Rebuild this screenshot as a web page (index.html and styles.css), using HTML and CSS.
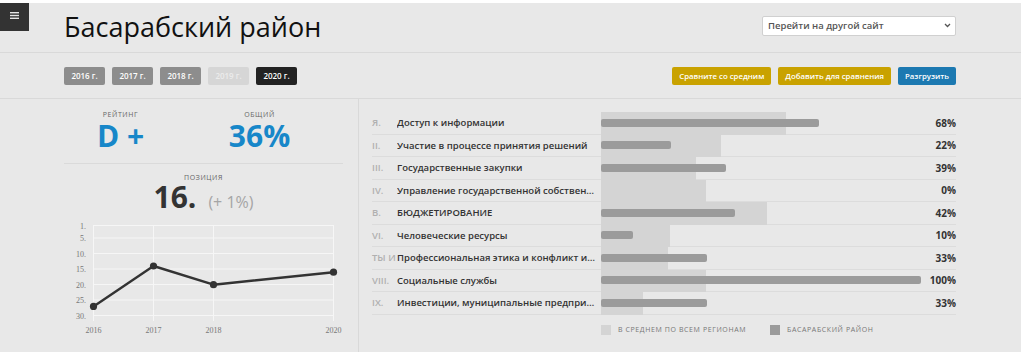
FILE: index.html
```html
<!DOCTYPE html>
<html lang="ru">
<head>
<meta charset="utf-8">
<title>Басарабский район</title>
<link rel="stylesheet" href="styles.css">
</head>
<body>
<div class="page">
  <button class="menu-btn" aria-label="menu">
    <svg width="9" height="7" viewBox="0 0 9 7"><rect x="0" y="0" width="9" height="1.4" fill="#e6e6e6"/><rect x="0" y="2.8" width="9" height="1.4" fill="#e6e6e6"/><rect x="0" y="5.6" width="9" height="1.4" fill="#e6e6e6"/></svg>
  </button>
  <header class="header">
    <h1 class="title">Басарабский район</h1>
    <div class="site-select">
      <span>Перейти на другой сайт</span>
      <svg width="7" height="5" viewBox="0 0 7 5"><path d="M1 1 L3.5 3.5 L6 1" fill="none" stroke="#555" stroke-width="1.3"/></svg>
    </div>
  </header>
  <div class="toolbar">
    <div class="years">
      <span class="btn year">2016 г.</span>
      <span class="btn year">2017 г.</span>
      <span class="btn year">2018 г.</span>
      <span class="btn year disabled">2019 г.</span>
      <span class="btn year active">2020 г.</span>
    </div>
    <div class="actions">
      <span class="btn gold">Сравните со средним</span>
      <span class="btn gold">Добавить для сравнения</span>
      <span class="btn blue">Разгрузить</span>
    </div>
  </div>
  <main class="main">
    <section class="left">
      <div class="scores">
        <div class="score">
          <div class="small-label">РЕЙТИНГ</div>
          <div class="big-value blue-text">D +</div>
        </div>
        <div class="score">
          <div class="small-label">ОБЩИЙ</div>
          <div class="big-value blue-text">36%</div>
        </div>
      </div>
      <div class="position">
        <div class="small-label">ПОЗИЦИЯ</div>
        <div class="pos-value"><span class="pos-num">16.</span><span class="pos-delta">(+ 1%)</span></div>
      </div>
      <svg class="chart" width="359" height="140" viewBox="0 0 359 140">
        <g stroke="#f6f6f6" stroke-width="1">
          <line x1="93" y1="14.5" x2="334" y2="14.5"/>
          <line x1="93" y1="27" x2="334" y2="27"/>
          <line x1="93" y1="42.5" x2="334" y2="42.5"/>
          <line x1="93" y1="58" x2="334" y2="58"/>
          <line x1="93" y1="73.5" x2="334" y2="73.5"/>
          <line x1="93" y1="89" x2="334" y2="89"/>
          <line x1="93" y1="104.5" x2="334" y2="104.5"/>
          <line x1="93.5" y1="14.5" x2="93.5" y2="110"/>
          <line x1="153.5" y1="14.5" x2="153.5" y2="110"/>
          <line x1="213.5" y1="14.5" x2="213.5" y2="110"/>
          <line x1="333.5" y1="14.5" x2="333.5" y2="110"/>
        </g>
        <g class="axis-text" text-anchor="end">
          <text x="86" y="17.5">1.</text>
          <text x="86" y="30">5.</text>
          <text x="86" y="45.5">10.</text>
          <text x="86" y="61">15.</text>
          <text x="86" y="76.5">20.</text>
          <text x="86" y="92">25.</text>
          <text x="86" y="107.5">30.</text>
        </g>
        <g class="axis-text" text-anchor="middle">
          <text x="93.5" y="122">2016</text>
          <text x="153.5" y="122">2017</text>
          <text x="213.5" y="122">2018</text>
          <text x="333.5" y="122">2020</text>
        </g>
        <polyline points="93.5,95.4 153.5,55 213.5,73.7 333.5,61.2" fill="none" stroke="#333" stroke-width="2.4" stroke-linejoin="round"/>
        <g fill="#333">
          <circle cx="93.5" cy="95.4" r="3.6"/>
          <circle cx="153.5" cy="55" r="3.6"/>
          <circle cx="213.5" cy="73.7" r="3.6"/>
          <circle cx="333.5" cy="61.2" r="3.6"/>
        </g>
      </svg>
    </section>
    <section class="right">
      <div class="rows">
        <div class="row"><span class="num">Я.</span><span class="label">Доступ к информации</span><span class="bar-cell"><span class="avg" style="width:57.8%"></span><span class="bar" style="width:68%"></span></span><span class="pct">68%</span></div>
        <div class="row"><span class="num">II.</span><span class="label">Участие в процессе принятия решений</span><span class="bar-cell"><span class="avg" style="width:37.5%"></span><span class="bar" style="width:22%"></span></span><span class="pct">22%</span></div>
        <div class="row"><span class="num">III.</span><span class="label">Государственные закупки</span><span class="bar-cell"><span class="avg" style="width:29.7%"></span><span class="bar" style="width:39%"></span></span><span class="pct">39%</span></div>
        <div class="row"><span class="num">IV.</span><span class="label">Управление государственной собственностью</span><span class="bar-cell"><span class="avg" style="width:32.8%"></span></span><span class="pct">0%</span></div>
        <div class="row"><span class="num">В.</span><span class="label">БЮДЖЕТИРОВАНИЕ</span><span class="bar-cell"><span class="avg" style="width:51.9%"></span><span class="bar" style="width:42%"></span></span><span class="pct">42%</span></div>
        <div class="row"><span class="num">VI.</span><span class="label">Человеческие ресурсы</span><span class="bar-cell"><span class="avg" style="width:21.6%"></span><span class="bar" style="width:10%"></span></span><span class="pct">10%</span></div>
        <div class="row"><span class="num">ТЫ И</span><span class="label">Профессиональная этика и конфликт интересов</span><span class="bar-cell"><span class="avg" style="width:21%"></span><span class="bar" style="width:33%"></span></span><span class="pct">33%</span></div>
        <div class="row"><span class="num">VIII.</span><span class="label">Социальные службы</span><span class="bar-cell"><span class="avg" style="width:32.8%"></span><span class="bar" style="width:100%"></span></span><span class="pct">100%</span></div>
        <div class="row"><span class="num">IX.</span><span class="label">Инвестиции, муниципальные предприятия</span><span class="bar-cell"><span class="avg" style="width:13%"></span><span class="bar" style="width:33%"></span></span><span class="pct">33%</span></div>
      </div>
      <div class="legend">
        <span class="legend-item"><span class="swatch swatch-avg"></span>В СРЕДНЕМ ПО ВСЕМ РЕГИОНАМ</span>
        <span class="legend-item"><span class="swatch swatch-dist"></span>БАСАРАБСКИЙ РАЙОН</span>
      </div>
    </section>
  </main>
</div>
</body>
</html>
```
FILE: styles.css
```css
* { box-sizing: border-box; }
html, body { margin: 0; padding: 0; background: #fff; }
body { font-family: "Open Sans", "Liberation Sans", sans-serif; color: #333; }

.page {
  position: relative;
  width: 1021px;
  height: 349px;
  margin-top: 3px;
  background: #e8e8e8;
  display: flex;
  flex-direction: column;
}

.menu-btn {
  position: absolute;
  left: 0;
  top: 0;
  width: 29px;
  height: 28px;
  border: 0;
  padding: 0;
  background: #333;
  display: flex;
  align-items: center;
  justify-content: center;
  padding-bottom: 3px;
}

.header {
  height: 50px;
  flex: none;
  padding: 0 65px 0 64px;
  display: flex;
  align-items: center;
  justify-content: space-between;
  border-bottom: 1px solid #d9d9d9;
}
.title {
  margin: 0;
  font-size: 27px;
  font-weight: 400;
  color: #111;
  line-height: 1;
  padding-bottom: 3px;
}
.site-select {
  width: 194px;
  height: 20px;
  background: #fff;
  border: 1px solid #d0d0d0;
  border-radius: 2px;
  display: flex;
  align-items: center;
  justify-content: space-between;
  padding: 0 4px 0 5px;
  font-size: 9.5px;
  font-weight: 600;
  color: #555;
  margin-bottom: 4px;
}

.toolbar {
  height: 46px;
  flex: none;
  padding: 0 65px 0 64px;
  display: flex;
  align-items: center;
  justify-content: space-between;
  border-bottom: 1px solid #d9d9d9;
}
.years, .actions { display: flex; gap: 7px; }
.btn {
  height: 18px;
  display: flex;
  align-items: center;
  justify-content: center;
  border-radius: 2px;
  color: #fff;
  font-size: 7.8px;
  font-weight: 600;
  white-space: nowrap;
}
.year { width: 41px; background: #8d8d8d; font-size: 8px; }
.year.disabled { background: #d6d6d6; color: #ececec; }
.year.active { background: #222; }
.gold { background: #c9a200; padding: 0 7px; }
.blue { background: #1c79b1; padding: 0 7px; }

.main { flex: 1; display: flex; min-height: 0; }

.left {
  width: 359px;
  flex: none;
  border-right: 1px solid #d9d9d9;
  padding-top: 11px;
}
.scores {
  display: grid;
  grid-template-columns: 139px 139px;
  padding-left: 51px;
  padding-bottom: 11px;
  margin: 0 15px 0 0;
}
.score { text-align: center; }
.small-label {
  font-size: 7px;
  line-height: 10px;
  color: #666;
  letter-spacing: 0.6px;
  text-align: center;
}
.big-value {
  font-size: 30px;
  line-height: 32px;
  font-weight: 700;
}
.blue-text { color: #1787c9; }
.position {
  margin: 0 15px 0 64px;
  border-top: 1px solid #dadada;
  padding-top: 9px;
  text-align: center;
}
.pos-value { height: 28px; line-height: 28px; display: flex; justify-content: center; align-items: baseline; gap: 12px; }
.pos-num { font-size: 30px; font-weight: 700; color: #333; line-height: 28px; }
.pos-delta { font-size: 16px; color: #a5a5a5; line-height: 28px; }
.chart { display: block; }
.axis-text text { font-family: "Liberation Serif", serif; font-size: 8px; fill: #777; }

.right {
  flex: 1;
  padding: 13px 65px 0 13px;
}
.row {
  display: grid;
  grid-template-columns: 25px 204px 320px 35px;
  height: 22.5px;
  align-items: center;
  border-bottom: 1px solid #dcdcdc;
}
.num {
  font-size: 9.5px;
  font-weight: 600;
  color: #b0b0b0;
  white-space: nowrap;
  overflow: visible;
}
.label {
  font-size: 9.5px;
  font-weight: 600;
  color: #333;
  white-space: nowrap;
  overflow: hidden;
  text-overflow: ellipsis;
  padding-right: 5px;
}
.bar-cell {
  position: relative;
  height: 100%;
}
.avg {
  position: absolute;
  left: 0;
  top: 0;
  bottom: -1px;
  background: #d4d4d4;
}
.bar {
  position: absolute;
  left: 0;
  top: 50%;
  height: 8px;
  margin-top: -4px;
  background: #9b9b9b;
  border-radius: 2px;
}
.pct {
  font-size: 10px;
  font-weight: 700;
  color: #333;
  text-align: right;
}

.legend {
  display: flex;
  gap: 24px;
  padding-left: 229px;
  margin-top: 10px;
}
.legend-item {
  display: flex;
  align-items: center;
  gap: 7px;
  font-size: 7px;
  letter-spacing: 0.6px;
  color: #777;
}
.swatch { width: 10px; height: 10px; display: inline-block; }
.swatch-avg { background: #d4d4d4; }
.swatch-dist { background: #9b9b9b; }
```
